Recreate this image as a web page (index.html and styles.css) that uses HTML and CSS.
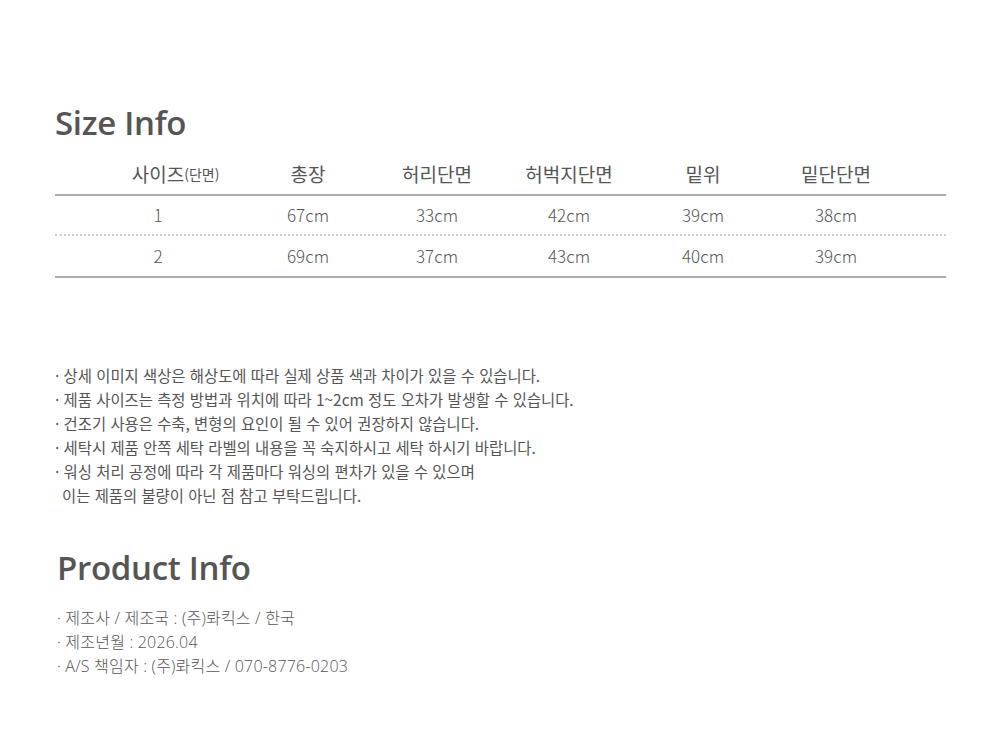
FILE: index.html
```html
<!DOCTYPE html>
<html lang="ko">
<head>
<meta charset="utf-8">
<title>Size Info</title>
<link rel="stylesheet" href="styles.css">
</head>
<body>
<div class="page">
  <section class="size">
    <h2 class="title">Size Info</h2>
    <div class="table">
      <div class="row head">
        <div class="cell"><span class="first">사이즈<span class="sub">(단면)</span></span></div>
        <div class="cell">총장</div>
        <div class="cell">허리단면</div>
        <div class="cell">허벅지단면</div>
        <div class="cell">밑위</div>
        <div class="cell">밑단단면</div>
      </div>
      <div class="row data dotted">
        <div class="cell">1</div>
        <div class="cell">67cm</div>
        <div class="cell">33cm</div>
        <div class="cell">42cm</div>
        <div class="cell">39cm</div>
        <div class="cell">38cm</div>
      </div>
      <div class="row data last">
        <div class="cell">2</div>
        <div class="cell">69cm</div>
        <div class="cell">37cm</div>
        <div class="cell">43cm</div>
        <div class="cell">40cm</div>
        <div class="cell">39cm</div>
      </div>
    </div>
  </section>

  <ul class="notes">
    <li>· 상세 이미지 색상은 해상도에 따라 실제 상품 색과 차이가 있을 수 있습니다.</li>
    <li>· 제품 사이즈는 측정 방법과 위치에 따라 1~2cm 정도 오차가 발생할 수 있습니다.</li>
    <li>· 건조기 사용은 수축, 변형의 요인이 될 수 있어 권장하지 않습니다.</li>
    <li>· 세탁시 제품 안쪽 세탁 라벨의 내용을 꼭 숙지하시고 세탁 하시기 바랍니다.</li>
    <li>· 워싱 처리 공정에 따라 각 제품마다 워싱의 편차가 있을 수 있으며<br><span class="indent">이는 제품의 불량이 아닌 점 참고 부탁드립니다.</span></li>
  </ul>

  <section class="product">
    <h2 class="title title-product">Product Info</h2>
    <ul class="plist">
      <li>· 제조사 / 제조국 : (주)롸킥스 / 한국</li>
      <li>· 제조년월 : 2026.04</li>
      <li>· A/S 책임자 : (주)롸킥스 / 070-8776-0203</li>
    </ul>
  </section>
</div>
</body>
</html>
```
FILE: styles.css
```css
html, body {
  margin: 0;
  padding: 0;
  background: #fff;
}
body {
  font-family: "Noto Sans CJK KR", "Noto Sans", sans-serif;
  color: #555;
}
.page {
  width: 1000px;
  height: 734px;
  padding: 100px 54px 0 55px;
  box-sizing: border-box;
}
.title {
  margin: 0;
  font-family: "Open Sans", "Noto Sans", sans-serif;
  font-weight: 600;
  font-size: 33px;
  line-height: 46px;
  color: #555;
  letter-spacing: -0.3px;
}
.table {
  margin-top: 8px;
}
.row {
  display: grid;
  grid-template-columns: 172px 128px 130px 134px 134px 132px;
  padding-left: 17px;
  align-items: center;
  text-align: center;
}
.head {
  height: 40px;
  font-size: 19px;
  font-weight: 400;
  color: #555;
  border-bottom: 2px solid #aaa;
}
.first {
  position: relative;
}
.sub {
  position: absolute;
  left: 100%;
  bottom: 1px;
  font-size: 14px;
  white-space: nowrap;
}
.data {
  height: 38px;
  font-size: 17px;
  font-weight: 300;
  color: #555;
}
.dotted {
  border-bottom: 2px dotted #ccc;
}
.last {
  height: 40px;
  border-bottom: 2px solid #aaa;
}
.cell {
  line-height: 24px;
}
.notes {
  list-style: none;
  margin: 85px 0 0;
  padding: 0;
  font-size: 15.4px;
  font-weight: 400;
  line-height: 24px;
  color: #555;
}
.indent {
  padding-left: 7px;
}
.product {
  margin-top: 38px;
}
.title-product {
  padding-left: 2px;
}
.plist {
  list-style: none;
  margin: 15px 0 0 2px;
  padding: 0;
  font-family: "Open Sans", "Noto Sans CJK KR", sans-serif;
  font-size: 16px;
  font-weight: 300;
  line-height: 24px;
  letter-spacing: 0.2px;
  color: #555;
}
```
